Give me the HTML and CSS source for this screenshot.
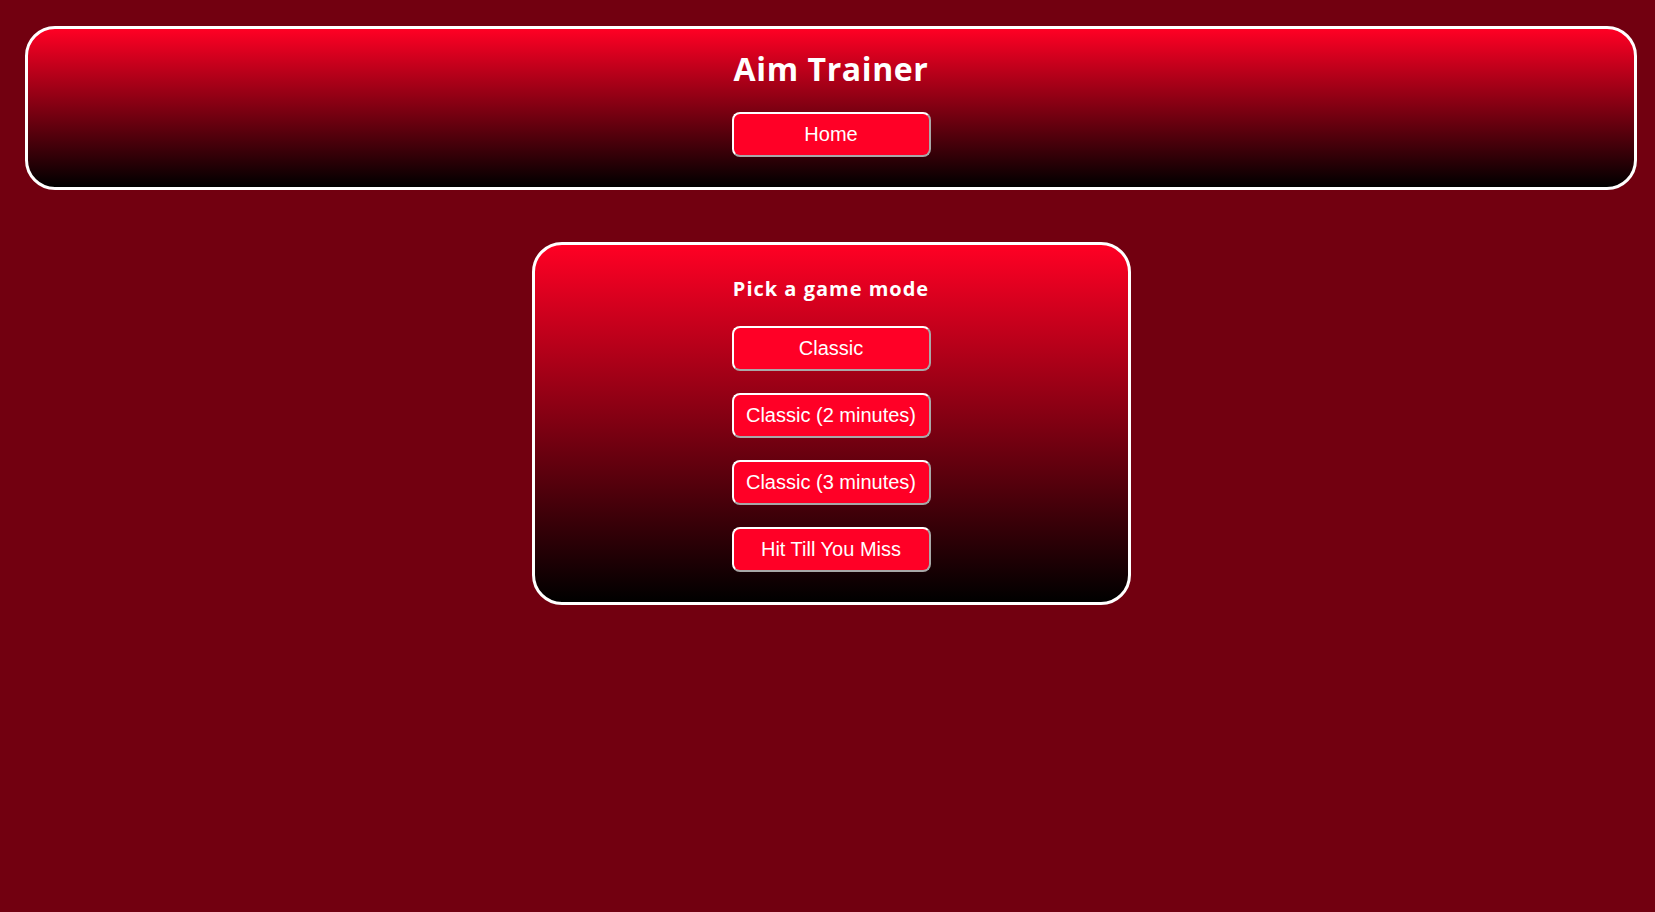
FILE: index.html
```html
<!DOCTYPE html>
<html lang="en">
<head>
<meta charset="utf-8">
<title>Aim Trainer</title>
<link rel="stylesheet" href="styles.css">
</head>
<body>
  <div class="page">
    <header class="panel header">
      <h1 class="title">Aim Trainer</h1>
      <button class="btn" type="button">Home</button>
    </header>
    <main class="panel modes">
      <h2 class="subtitle">Pick a game mode</h2>
      <div class="mode-list">
        <button class="btn" type="button">Classic</button>
        <button class="btn" type="button">Classic (2 minutes)</button>
        <button class="btn" type="button">Classic (3 minutes)</button>
        <button class="btn" type="button">Hit Till You Miss</button>
      </div>
    </main>
  </div>
</body>
</html>
```

FILE: styles.css
```css
html, body {
  margin: 0;
  padding: 0;
  height: 100%;
}

body {
  background: #720010;
  font-family: "Liberation Sans", Arial, sans-serif;
  color: #fff;
}

.page {
  padding: 26px 18px 0 25px;
  display: flex;
  flex-direction: column;
  align-items: stretch;
}

.panel {
  box-sizing: border-box;
  border: 3px solid #fff;
  border-radius: 30px;
  background: linear-gradient(to bottom, #ff0024 0%, #000 100%);
  display: flex;
  flex-direction: column;
  align-items: center;
}

.header {
  padding: 20px 0 30px;
}

.title {
  margin: 0 0 23px;
  font-family: "Open Sans", "DejaVu Sans", sans-serif;
  font-weight: 700;
  font-size: 32px;
  line-height: 40px;
  letter-spacing: 0.6px;
}

.modes {
  align-self: center;
  width: 599px;
  margin-top: 52px;
  padding: 30px 0 30px;
}

.subtitle {
  margin: 0 0 23px;
  font-family: "Open Sans", "DejaVu Sans", sans-serif;
  font-weight: 700;
  font-size: 20px;
  line-height: 28px;
  letter-spacing: 1px;
}

.mode-list {
  display: flex;
  flex-direction: column;
  gap: 22px;
}

.btn {
  box-sizing: border-box;
  width: 199px;
  height: 45px;
  padding: 0;
  border: 2px solid;
  border-color: #ffffff #a8a8a8 #a8a8a8 #ffffff;
  border-radius: 8px;
  background: #ff0026;
  color: #fff;
  font-family: "Liberation Sans", Arial, sans-serif;
  font-size: 20px;
  line-height: 41px;
  text-align: center;
  cursor: pointer;
}
```
